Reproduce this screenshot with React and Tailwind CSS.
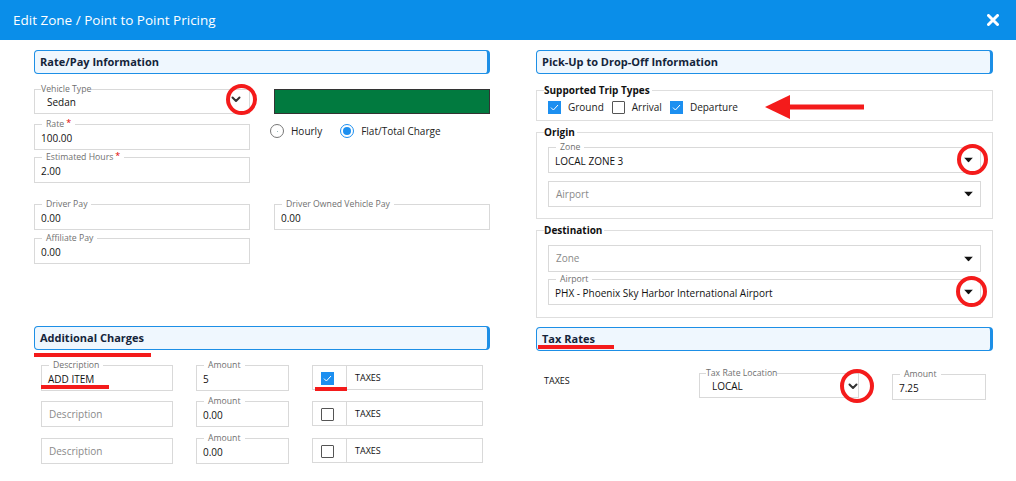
import React from "react";

function SectionHeader({ title }) {
  return (
    <div className="h-[24px] flex items-center pl-[5px] bg-[#eff7fe] border border-[#1d8fe6] border-r-[3px] rounded-[4px] text-[11px] font-bold text-[#14243a]">
      {title}
    </div>
  );
}

function Field({ label, req, tight, value, placeholder, className = "", labelLeft = "left-[7px]", valuePad = "pl-[6px]", children }) {
  return (
    <div className={`relative border border-[#d9d9d9] flex items-center ${className}`}>
      {label && (
        <span
          className={`absolute -top-[7px] ${labelLeft} bg-white ${tight ? "px-0" : "px-[4px]"} text-[8.7px] leading-[12px] text-[#707070] whitespace-nowrap`}
        >
          {label}
          {req && <span className="text-[#e00000] align-top text-[9px] leading-[9px] ml-[2px]">*</span>}
        </span>
      )}
      {value !== undefined && (
        <span className={`${valuePad} pt-[2px] text-[10px] text-[#111] whitespace-nowrap`}>{value}</span>
      )}
      {placeholder !== undefined && (
        <span className={`${valuePad} text-[10px] text-[#8a8a8a] whitespace-nowrap`}>{placeholder}</span>
      )}
      {children}
    </div>
  );
}

function Caret() {
  return (
    <svg width="9" height="5" viewBox="0 0 9 5" className="absolute right-[7px] top-1/2 -translate-y-1/2">
      <path d="M0 0 L9 0 L4.5 5 Z" fill="#111" />
    </svg>
  );
}

function Chevron({ className }) {
  return (
    <svg width="10" height="7" viewBox="0 0 10 7" className={className}>
      <path d="M1.5 1.5 L5 5 L8.5 1.5" fill="none" stroke="#333" strokeWidth="2" strokeLinecap="round" strokeLinejoin="round" />
    </svg>
  );
}

function RedCircle({ className }) {
  return <div className={`absolute rounded-full border-[4px] border-[#f41b1b] ${className}`} />;
}

function CheckBox({ checked, className = "" }) {
  return checked ? (
    <span className={`w-[13px] h-[13px] bg-[#1c8ff0] flex items-center justify-center shrink-0 ${className}`}>
      <svg width="9" height="7" viewBox="0 0 9 7">
        <path d="M1 3.6 L3.4 6 L8 1" fill="none" stroke="#fff" strokeWidth="1" />
      </svg>
    </span>
  ) : (
    <span className={`w-[13px] h-[13px] border border-[#555] rounded-[1px] bg-white shrink-0 ${className}`} />
  );
}

function TaxesBox({ checked }) {
  return (
    <div className="w-[171px] h-[25px] border border-[#d9d9d9] flex">
      <div className="w-[34px] border-r border-[#d9d9d9] flex items-center pl-[8px] pt-[2px]">
        <CheckBox checked={checked} />
      </div>
      <div className="pl-[8px] pt-[5px] text-[9px] text-[#111]">TAXES</div>
    </div>
  );
}

function GroupBox({ title, className = "", children }) {
  return (
    <div className={`relative border border-[#dedede] ${className}`}>
      <span className="absolute -top-[7px] left-[7px] bg-white pr-[2px] text-[10px] leading-[13px] font-bold text-[#111]">
        {title}
      </span>
      {children}
    </div>
  );
}

export default function App() {
  return (
    <div className="w-[1016px] h-[481px] bg-white overflow-hidden relative font-['Open_Sans',sans-serif]">
      <header className="h-[40px] bg-[#0a8ee9] flex items-center justify-between pl-[13px] pr-[17px] text-white">
        <span className="text-[13.5px]">Edit Zone / Point to Point Pricing</span>
        <svg width="12" height="12" viewBox="0 0 12 12">
          <path d="M1.5 1.5 L10.5 10.5 M10.5 1.5 L1.5 10.5" stroke="#fff" strokeWidth="3" strokeLinecap="round" />
        </svg>
      </header>

      <div className="flex pl-[34px] pt-[10px] gap-[46px]">
        {/* LEFT COLUMN */}
        <div className="w-[456px] flex flex-col relative">
          <SectionHeader title="Rate/Pay Information" />

          <div className="flex mt-[15px] gap-[24px]">
            <Field label="Vehicle Type" tight labelLeft="left-[6px]" value="Sedan" valuePad="pl-[12px]" className="w-[216px] h-[25px]">
              <Chevron className="absolute right-[8px] top-[6px]" />
              <RedCircle className="w-[31px] h-[31px] left-[191px] -top-[6px]" />
            </Field>
            <div className="w-[216px] h-[25px] bg-[#017a3f] border border-[#333]" />
          </div>

          <div className="flex mt-[10px]">
            <Field label="Rate" req value="100.00" className="w-[216px] h-[26px]" />
            <div className="flex items-start ml-[20px] h-[14px] text-[10px] text-[#222]">
              <span className="w-[14px] h-[14px] rounded-full border border-[#777] flex items-center justify-center">
                <span className="w-[1px] h-[1px] bg-[#9bb]" />
              </span>
              <span className="ml-[7px] leading-[14px]">Hourly</span>
              <span className="ml-[18px] w-[14px] h-[14px] rounded-full border border-[#1c8ff0] flex items-center justify-center">
                <span className="w-[8px] h-[8px] rounded-full bg-[#1c8ff0]" />
              </span>
              <span className="ml-[7px] leading-[14px]">Flat/Total Charge</span>
            </div>
          </div>

          <Field label="Estimated Hours" req value="2.00" className="w-[216px] h-[26px] mt-[7px]" />

          <div className="flex mt-[21px] gap-[24px]">
            <Field label="Driver Pay" value="0.00" className="w-[216px] h-[26px]" />
            <Field label="Driver Owned Vehicle Pay" value="0.00" className="w-[216px] h-[26px]" />
          </div>

          <Field label="Affiliate Pay" value="0.00" className="w-[216px] h-[26px] mt-[8px]" />

          <div className="mt-[62px] relative">
            <SectionHeader title="Additional Charges" />
            <div className="absolute left-0 top-[27px] w-[117px] h-[4px] bg-[#f41b1b]" />
          </div>

          <div className="flex mt-[15px] pl-[7px] gap-[23px] relative">
            <Field label="Description" value="ADD ITEM" className="w-[132px] h-[26px]" />
            <Field label="Amount" value="5" className="w-[93px] h-[26px]" />
            <TaxesBox checked />
            <div className="absolute left-[7px] top-[20px] w-[68px] h-[4px] bg-[#f41b1b]" />
            <div className="absolute left-[281px] top-[22px] w-[32px] h-[4px] bg-[#f41b1b]" />
          </div>
          <div className="flex mt-[10px] pl-[7px] gap-[23px]">
            <Field placeholder="Description" valuePad="pl-[7px]" className="w-[132px] h-[26px]" />
            <Field label="Amount" value="0.00" className="w-[93px] h-[26px]" />
            <TaxesBox />
          </div>
          <div className="flex mt-[11px] pl-[7px] gap-[23px]">
            <Field placeholder="Description" valuePad="pl-[7px]" className="w-[132px] h-[26px]" />
            <Field label="Amount" value="0.00" className="w-[93px] h-[26px]" />
            <TaxesBox />
          </div>
        </div>

        {/* RIGHT COLUMN */}
        <div className="w-[457px] flex flex-col">
          <SectionHeader title="Pick-Up to Drop-Off Information" />

          <GroupBox title="Supported Trip Types" className="mt-[16px] h-[31px]">
            <div className="flex items-center pl-[11px] pt-[9px] text-[10px] text-[#222] relative">
              <CheckBox checked />
              <span className="ml-[7px]">Ground</span>
              <CheckBox className="ml-[8px]" />
              <span className="ml-[7px]">Arrival</span>
              <CheckBox checked className="ml-[8px]" />
              <span className="ml-[7px]">Departure</span>
              <svg width="100" height="26" viewBox="0 0 100 26" className="absolute left-[228px] top-[3px]">
                <path d="M0 13 L25 1 L25 25 Z" fill="#f41b1b" />
                <rect x="22" y="10.5" width="77" height="5" fill="#f41b1b" />
              </svg>
            </div>
          </GroupBox>

          <GroupBox title="Origin" className="mt-[11px] h-[87px] pl-[11px]">
            <Field label="Zone" value="LOCAL ZONE 3" className="w-[433px] h-[26px] mt-[14px]">
              <Caret />
              <RedCircle className="w-[31px] h-[31px] left-[408px] -top-[4px]" />
            </Field>
            <Field placeholder="Airport" valuePad="pl-[7px]" className="w-[433px] h-[26px] mt-[8px]">
              <Caret />
            </Field>
          </GroupBox>

          <GroupBox title="Destination" className="mt-[11px] h-[88px] pl-[11px]">
            <Field placeholder="Zone" valuePad="pl-[7px]" className="w-[433px] h-[27px] mt-[14px]">
              <Caret />
            </Field>
            <Field label="Airport" value="PHX - Phoenix Sky Harbor International Airport" className="w-[433px] h-[26px] mt-[7px]">
              <Caret />
              <RedCircle className="w-[31px] h-[31px] left-[407px] -top-[4px]" />
            </Field>
          </GroupBox>

          <div className="mt-[9px] relative">
            <SectionHeader title="Tax Rates" />
            <div className="absolute left-[2px] top-[18px] w-[76px] h-[4px] bg-[#f41b1b]" />
          </div>

          <div className="flex mt-[22px] pl-[8px]">
            <span className="w-[155px] pt-[1px] text-[9px] text-[#111]">TAXES</span>
            <Field label="Tax Rate Location" tight labelLeft="left-[6px]" value="LOCAL" valuePad="pl-[12px]" className="w-[160px] h-[25px]">
              <Chevron className="absolute right-[0px] top-[9px]" />
              <RedCircle className="w-[34px] h-[34px] left-[140px] -top-[5px]" />
            </Field>
            <Field label="Amount" value="7.25" className="w-[94px] h-[26px] ml-[33px] mt-[1px]" />
          </div>
        </div>
      </div>
    </div>
  );
}
